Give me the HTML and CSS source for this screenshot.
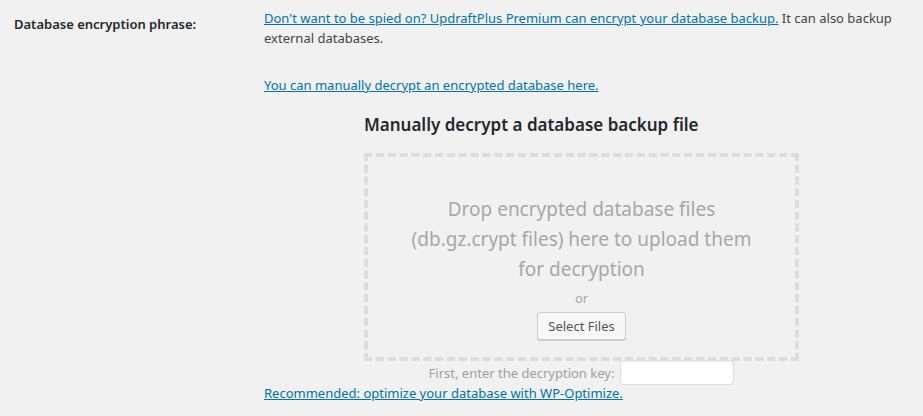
FILE: index.html
```html
<!DOCTYPE html>
<html>
<head>
<meta charset="utf-8">
<link rel="stylesheet" href="styles.css">
</head>
<body>
<div class="settings-row">
  <div class="label">Database encryption phrase:</div>
  <div class="field">
    <p class="intro"><a href="#">Don't want to be spied on? UpdraftPlus Premium can encrypt your database backup.</a> It can also backup<br>external databases.</p>
    <p class="manual-link"><a href="#">You can manually decrypt an encrypted database here.</a></p>
    <div class="decrypt">
      <h3 class="decrypt-title">Manually decrypt a database backup file</h3>
      <div class="dropzone">
        <div class="drop-text">Drop encrypted database files<br>(db.gz.crypt files) here to upload them<br>for decryption</div>
        <div class="drop-or">or</div>
        <button class="btn" type="button">Select Files</button>
      </div>
      <div class="key-row">
        <span class="key-label">First, enter the decryption key:</span>
        <input class="key-input" type="text">
      </div>
    </div>
    <p class="recommend"><a href="#">Recommended: optimize your database with WP-Optimize.</a></p>
  </div>
</div>
</body>
</html>
```

FILE: styles.css
```css
html, body {
  margin: 0;
  padding: 0;
  background: #f1f1f1;
}
body {
  font-family: "Noto Sans", "Open Sans", sans-serif;
  font-size: 13px;
  color: #444;
  width: 923px;
  height: 416px;
  overflow: hidden;
}
a {
  color: #0073aa;
  text-decoration: underline;
}
.settings-row {
  display: flex;
}
.label {
  width: 250px;
  padding: 14px 0 0 14px;
  font-size: 13px;
  font-weight: 600;
  color: #23282d;
  line-height: 20px;
  flex: none;
}
.field {
  padding-top: 8px;
  flex: 1;
}
.intro {
  margin: 0;
  line-height: 20px;
}
.manual-link {
  margin: 27px 0 0;
  line-height: 20px;
}
.decrypt {
  margin-left: 100px;
  width: 435px;
}
.decrypt-title {
  margin: 18px 0 0;
  font-size: 17px;
  font-weight: 600;
  line-height: 24px;
  color: #23282d;
}
.dropzone {
  margin-top: 16px;
  box-sizing: border-box;
  height: 208px;
  border: 4px dashed #dcdcdc;
  padding-top: 37px;
  text-align: center;
}
.drop-text {
  font-size: 19px;
  line-height: 30px;
  color: #a7a7a7;
}
.drop-or {
  margin-top: 4px;
  line-height: 20px;
  color: #a7a7a7;
}
.btn {
  margin-top: 4px;
  height: 28px;
  padding: 0 10px;
  font-family: inherit;
  font-size: 13px;
  color: #555;
  background: #f7f7f7;
  border: 1px solid #ccc;
  border-radius: 3px;
  box-shadow: 0 1px 0 #ccc;
}
.key-row {
  display: flex;
  justify-content: center;
  align-items: center;
  gap: 6px;
  margin-top: -1px;
}
.key-label {
  color: #a0a0a0;
}
.key-input {
  box-sizing: border-box;
  width: 114px;
  height: 25px;
  background: #fff;
  border: 1px solid #ddd;
  border-radius: 4px;
  box-shadow: inset 0 1px 2px rgba(0,0,0,0.07);
}
.recommend {
  margin: -1px 0 0;
  line-height: 18px;
}
```
